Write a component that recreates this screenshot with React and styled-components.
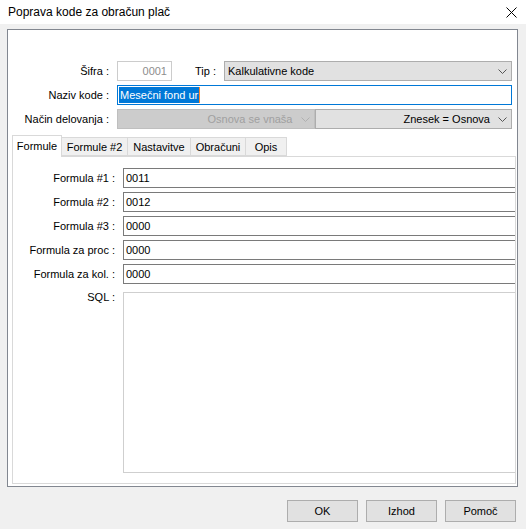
import React from "react";
import styled, { createGlobalStyle } from "styled-components";

const GlobalStyle = createGlobalStyle`
  * { box-sizing: border-box; }
  body {
    margin: 0;
    background: #f0f0f0;
  }
`;

const Window = styled.div`
  width: 526px;
  height: 529px;
  display: flex;
  flex-direction: column;
  background: #f0f0f0;
  font-family: "Liberation Sans", Arial, sans-serif;
  font-size: 11px;
  color: #000;
  overflow: hidden;
`;

const TitleBar = styled.div`
  height: 24px;
  flex: none;
  display: flex;
  align-items: center;
  justify-content: space-between;
  padding: 0 9px 0 8px;
  background: #fff;
  font-size: 12px;
`;

const Frame = styled.div`
  height: 458px;
  margin: 5px 8px 0 7px;
  display: flex;
  flex-direction: column;
  padding: 31px 0 2px 0;
  background: #fff;
  border: 1px solid #828790;
`;

const HeaderGrid = styled.div`
  display: grid;
  grid-template-columns: 101px 1fr;
  grid-auto-rows: 20px;
  column-gap: 8px;
  row-gap: 4px;
  padding-right: 5px;
`;

const Label = styled.div`
  display: flex;
  align-items: ${(p) => (p.$top ? "flex-start" : "center")};
  justify-content: flex-end;
  padding-top: ${(p) => (p.$top ? "3px" : "0")};
  white-space: nowrap;
`;

const Inline = styled.div`
  display: flex;
  align-items: center;
  min-width: 0;
`;

const CodeBox = styled.div`
  width: 55px;
  height: 20px;
  display: flex;
  align-items: center;
  justify-content: flex-end;
  padding-right: 4px;
  border: 1px solid #cccccc;
  color: #8d8d8d;
`;

const InlineLabel = styled.div`
  margin: 0 8px 0 23px;
  white-space: nowrap;
`;

const Combo = styled.div`
  flex: 1;
  height: 20px;
  display: flex;
  align-items: center;
  justify-content: ${(p) => (p.$right ? "flex-end" : "space-between")};
  gap: 8px;
  padding: 0 4px 0 3px;
  background: ${(p) => (p.$disabled ? "#cccccc" : "#e1e1e1")};
  border: 1px solid ${(p) => (p.$disabled ? "#bfbfbf" : "#adadad")};
  color: ${(p) => (p.$disabled ? "#a0a0a0" : "#000")};
  white-space: nowrap;
  overflow: hidden;
`;

const TextBox = styled.div`
  height: 20px;
  display: flex;
  align-items: center;
  padding-left: 1px;
  border: 1px solid #0078d7;
  background: #fff;
`;

const Selection = styled.span`
  display: inline-flex;
  align-items: center;
  height: 16px;
  padding: 0 1px;
  background: #0078d7;
  color: #fff;
`;

const Caret = styled.span`
  width: 1px;
  height: 16px;
  background: #ff8728;
`;

const ComboPair = styled.div`
  display: flex;
`;

const Tabs = styled.div`
  flex: 1;
  display: flex;
  flex-direction: column;
  margin: 6px 1px 0 4px;
`;

const TabStrip = styled.div`
  height: 21px;
  display: flex;
  align-items: flex-end;
  position: relative;
  z-index: 1;
`;

const Tab = styled.div`
  width: ${(p) => p.$w}px;
  height: ${(p) => (p.$active ? 22 : 19)}px;
  display: flex;
  align-items: center;
  justify-content: center;
  padding-bottom: ${(p) => (p.$active ? 2 : 0)}px;
  margin-bottom: ${(p) => (p.$active ? -1 : 0)}px;
  margin-left: -1px;
  background: ${(p) => (p.$active ? "#fff" : "#f0f0f0")};
  border: 1px solid #d9d9d9;
  border-bottom: ${(p) => (p.$active ? "none" : "1px solid #d9d9d9")};
  white-space: nowrap;
  &:first-child { margin-left: 0; }
`;

const TabPanel = styled.div`
  flex: 1;
  display: grid;
  grid-template-columns: 102px 1fr;
  grid-template-rows: repeat(5, 20px) 1fr;
  column-gap: 8px;
  row-gap: 4px;
  padding: 11px 0 10px 0;
  background: #fff;
  border: 1px solid #d9d9d9;
`;

const FieldBox = styled.div`
  height: 20px;
  display: flex;
  align-items: center;
  padding-left: 2px;
  border: 1px solid #7a7a7a;
  border-right: none;
`;

const SqlBox = styled.div`
  margin-top: 4px;
  border: 1px solid #cfcfcf;
  border-right: none;
`;

const ButtonRow = styled.div`
  display: flex;
  justify-content: flex-end;
  gap: 8px;
  padding: 13px 10px 0 0;
`;

const Button = styled.div`
  width: 71px;
  height: 22px;
  display: flex;
  align-items: center;
  justify-content: center;
  background: #e1e1e1;
  border: 1px solid #adadad;
`;

const Chevron = ({ color = "#555" }) => (
  <svg width="9" height="5" viewBox="0 0 9 5">
    <polyline points="0.5,0.5 4.5,4.5 8.5,0.5" fill="none" stroke={color} strokeWidth="1" />
  </svg>
);

const CloseIcon = () => (
  <svg width="11" height="11" viewBox="0 0 11 11">
    <path d="M0.5 0.5 L10.5 10.5 M10.5 0.5 L0.5 10.5" stroke="#000" strokeWidth="1" />
  </svg>
);

const tabs = [
  { name: "Formule", w: 50, active: true },
  { name: "Formule #2", w: 67 },
  { name: "Nastavitve", w: 64 },
  { name: "Obračuni", w: 56 },
  { name: "Opis", w: 42 },
];

const formulas = [
  ["Formula #1 :", "0011"],
  ["Formula #2 :", "0012"],
  ["Formula #3 :", "0000"],
  ["Formula za proc :", "0000"],
  ["Formula za kol. :", "0000"],
];

export default function App() {
  return (
    <>
      <GlobalStyle />
      <Window>
        <TitleBar>
          <span>Poprava kode za obračun plač</span>
          <CloseIcon />
        </TitleBar>

        <Frame>
          <HeaderGrid>
            <Label>Šifra :</Label>
            <Inline>
              <CodeBox>0001</CodeBox>
              <InlineLabel>Tip :</InlineLabel>
              <Combo>
                <span>Kalkulativne kode</span>
                <Chevron />
              </Combo>
            </Inline>

            <Label>Naziv kode :</Label>
            <TextBox>
              <Selection>Mesečni fond ur</Selection>
              <Caret />
            </TextBox>

            <Label>Način delovanja :</Label>
            <ComboPair>
              <Combo $disabled $right>
                <span>Osnova se vnaša</span>
                <Chevron color="#b0b0b0" />
              </Combo>
              <Combo $right>
                <span>Znesek = Osnova</span>
                <Chevron />
              </Combo>
            </ComboPair>
          </HeaderGrid>

          <Tabs>
            <TabStrip>
              {tabs.map((t) => (
                <Tab key={t.name} $w={t.w} $active={t.active}>
                  {t.name}
                </Tab>
              ))}
            </TabStrip>
            <TabPanel>
              {formulas.map(([label, value]) => (
                <React.Fragment key={label}>
                  <Label>{label}</Label>
                  <FieldBox>{value}</FieldBox>
                </React.Fragment>
              ))}
              <Label $top>SQL :</Label>
              <SqlBox />
            </TabPanel>
          </Tabs>
        </Frame>

        <ButtonRow>
          <Button>OK</Button>
          <Button>Izhod</Button>
          <Button>Pomoč</Button>
        </ButtonRow>
      </Window>
    </>
  );
}
